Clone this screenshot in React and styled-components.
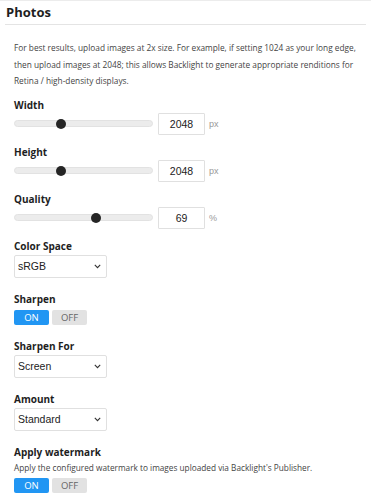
import React from "react";
import styled, { createGlobalStyle } from "styled-components";

const Global = createGlobalStyle`
  html, body { margin: 0; padding: 0; background: #fff; }
  body { font-family: "Open Sans", "Noto Sans", sans-serif; color: #222; }
  * { box-sizing: border-box; }
`;

const Page = styled.div`
  width: 371px;
  border-top: 1px solid #ececec;
`;

const Header = styled.header`
  margin: 0 5px;
  border-bottom: 1px solid #e4e4e4;
`;

const Title = styled.h2`
  margin: 0;
  padding-left: 1px;
  font-size: 13px;
  line-height: 23px;
  font-weight: 700;
  color: #1e1e1e;
`;

const Content = styled.div`
  padding: 15px 14px 0 14px;
`;

const Intro = styled.p`
  margin: 0 0 7px 0;
  font-size: 8.3px;
  line-height: 16.5px;
  color: #444;
`;

const Field = styled.div`
  margin-bottom: ${(p) => (p.$tight ? 9 : 13)}px;
`;

const Label = styled.div`
  font-size: 10px;
  line-height: 16px;
  font-weight: 700;
  color: #1e1e1e;
`;

const Help = styled.div`
  font-size: 8.25px;
  line-height: 16px;
  color: #444;
`;

const SliderRow = styled.div`
  display: flex;
  align-items: center;
  height: 22px;
`;

const Range = styled.input.attrs({ type: "range" })`
  -webkit-appearance: none;
  appearance: none;
  width: 139px;
  height: 7px;
  margin: 0 5px 0 0;
  padding: 0;
  background: #ececec;
  border: 1px solid #e2e2e2;
  border-radius: 4px;
  outline: none;
  &::-webkit-slider-thumb {
    -webkit-appearance: none;
    appearance: none;
    width: 10px;
    height: 10px;
    border-radius: 50%;
    background: #252525;
    border: none;
  }
  &::-moz-range-thumb {
    width: 10px;
    height: 10px;
    border-radius: 50%;
    background: #252525;
    border: none;
  }
`;

const NumberBox = styled.input`
  width: 47px;
  height: 22px;
  padding: 0 2px;
  border: 1px solid #e0e0e0;
  border-radius: 1px;
  font-family: "Liberation Sans", Arial, sans-serif;
  font-size: 10.5px;
  color: #222;
  text-align: center;
  outline: none;
`;

const Unit = styled.span`
  margin-left: 4px;
  font-family: "Liberation Sans", Arial, sans-serif;
  font-size: 9px;
  color: #999;
`;

const SelectWrap = styled.div`
  position: relative;
  width: 93px;
  margin-top: 1px;
`;

const Select = styled.select`
  -webkit-appearance: none;
  appearance: none;
  display: block;
  width: 93px;
  height: 23px;
  padding: 0 0 0 3px;
  border: 1px solid #e0e0e0;
  border-radius: 2px;
  background: #fff;
  font-family: "Liberation Sans", Arial, sans-serif;
  font-size: 10.5px;
  color: #222;
  outline: none;
`;

const Chevron = styled.svg`
  position: absolute;
  right: 6px;
  top: 9px;
  width: 7px;
  height: 5px;
  pointer-events: none;
`;

const Toggle = styled.div`
  display: flex;
  gap: 3px;
  margin-top: ${(p) => p.$top}px;
`;

const ToggleBtn = styled.button`
  width: 35px;
  height: 15px;
  padding: 0;
  border: none;
  border-radius: 2px;
  font-family: "Open Sans", "Noto Sans", sans-serif;
  font-size: 9.5px;
  line-height: 15px;
  background: ${(p) => (p.$active ? "#2196f3" : "#e2e2e2")};
  color: ${(p) => (p.$active ? "#fff" : "#666")};
`;

function SliderField({ label, value, max, unit }) {
  return (
    <Field $tight>
      <Label>{label}</Label>
      <SliderRow>
        <Range min={0} max={max} defaultValue={value} />
        <NumberBox defaultValue={value} />
        <Unit>{unit}</Unit>
      </SliderRow>
    </Field>
  );
}

function SelectBox({ options }) {
  return (
    <SelectWrap>
      <Select defaultValue={options[0]}>
        {options.map((o) => (
          <option key={o}>{o}</option>
        ))}
      </Select>
      <Chevron viewBox="0 0 7 5">
        <path d="M0.8 0.8 L3.5 3.6 L6.2 0.8" fill="none" stroke="#333" strokeWidth="1.1" />
      </Chevron>
    </SelectWrap>
  );
}

function OnOff({ top }) {
  return (
    <Toggle $top={top}>
      <ToggleBtn $active>ON</ToggleBtn>
      <ToggleBtn>OFF</ToggleBtn>
    </Toggle>
  );
}

export default function App() {
  return (
    <>
      <Global />
      <Page>
        <Header>
          <Title>Photos</Title>
        </Header>
        <Content>
          <Intro>
            For best results, upload images at 2x size. For example, if setting 1024 as your long edge,
            then upload images at 2048; this allows Backlight to generate appropriate renditions for
            Retina / high-density displays.
          </Intro>
          <SliderField label="Width" value={2048} max={6280} unit="px" />
          <SliderField label="Height" value={2048} max={6280} unit="px" />
          <SliderField label="Quality" value={69} max={116} unit="%" />
          <Field>
            <Label>Color Space</Label>
            <SelectBox options={["sRGB", "Adobe RGB"]} />
          </Field>
          <Field>
            <Label>Sharpen</Label>
            <OnOff top={3} />
          </Field>
          <Field>
            <Label>Sharpen For</Label>
            <SelectBox options={["Screen", "Matte Paper", "Glossy Paper"]} />
          </Field>
          <Field>
            <Label>Amount</Label>
            <SelectBox options={["Standard", "Low", "High"]} />
          </Field>
          <Field>
            <Label>Apply watermark</Label>
            <Help>Apply the configured watermark to images uploaded via Backlight's Publisher.</Help>
            <OnOff top={2} />
          </Field>
        </Content>
      </Page>
    </>
  );
}
